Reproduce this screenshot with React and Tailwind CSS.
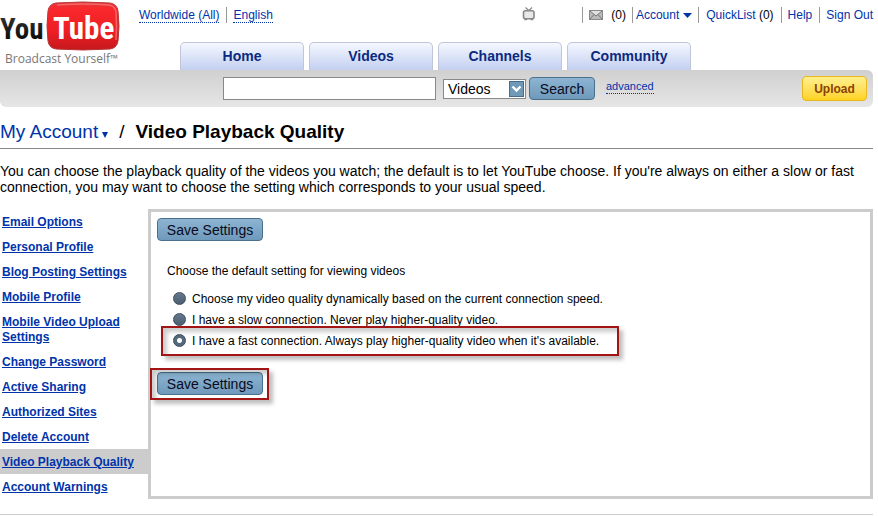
import React from "react";

const LINK = "text-[#0033aa]";
const BLUE_BUTTON =
  "h-[23px] rounded-[4px] border border-[#4a708c] bg-gradient-to-b from-[#8db4d2] to-[#6f99bb] pt-px text-[14px] leading-[21px] text-[#0a0a20]";

function Logo() {
  return (
    <svg width="139" height="70" viewBox="0 0 139 70" className="block" role="img" aria-label="YouTube, Broadcast Yourself">
      <defs>
        <linearGradient id="screen" x1="0" y1="0" x2="0" y2="1">
          <stop offset="0" stopColor="#e2383b" />
          <stop offset="0.15" stopColor="#f8282c" />
          <stop offset="0.6" stopColor="#ee1f24" />
          <stop offset="1" stopColor="#c4181c" />
        </linearGradient>
        <linearGradient id="ink" x1="0" y1="0" x2="0" y2="1">
          <stop offset="0" stopColor="#3a3a3a" />
          <stop offset="1" stopColor="#000" />
        </linearGradient>
      </defs>
      <path
        d="M56 3 Q83 1 110 3 Q117 4 118 11 Q120 26 118 41 Q117 48 110 49 Q83 51 56 49 Q49 48 48 41 Q46 26 48 11 Q49 4 56 3Z"
        fill="url(#screen)"
        stroke="#b8383a"
        strokeWidth="1"
      />
      <path
        d="M57 5 Q83 3 109 5 Q115 6 116 12 Q117 26 116 40"
        fill="none"
        stroke="#ff8a8a"
        strokeOpacity="0.6"
        strokeWidth="1.5"
      />
      <g fontFamily="'Liberation Sans Narrow','Roboto Condensed','Open Sans Condensed',Roboto,sans-serif" fontWeight="700">
        <text x="0" y="39" fontSize="29" fill="url(#ink)">You</text>
        <text x="53" y="39" fontSize="31" fill="#fff">Tube</text>
      </g>
      <text x="5" y="63" fontFamily="'Open Sans','Noto Sans',sans-serif" fontSize="12" fill="#777">
        Broadcast Yourself<tspan fontSize="10" dy="-1">™</tspan>
      </text>
    </svg>
  );
}

function TvIcon() {
  return (
    <svg width="14" height="14" viewBox="0 0 14 14" aria-hidden="true">
      <path d="M3.500 0.500 L6.600 3.400 M10 0.500 L7 3.400" stroke="#888" strokeWidth="1.300" />
      <rect x="1.500" y="3.700" width="10.500" height="8" rx="2" fill="#e8e8e8" stroke="#888" strokeWidth="1.600" />
      <path d="M2.500 12.600h2.500M8.600 12.600h2.500" stroke="#888" strokeWidth="1.400" />
    </svg>
  );
}

function MailIcon() {
  return (
    <svg width="14" height="10" viewBox="0 0 14 10" aria-hidden="true">
      <rect x="0.5" y="0.5" width="13" height="9" fill="#bbb" stroke="#888" />
      <path d="M1 1 L7 6 L13 1Z" fill="#e2e2e2" />
      <path d="M1 1 L7 6 L13 1 M1 9 L5 4.6 M13 9 L9 4.6" fill="none" stroke="#777" />
    </svg>
  );
}

function Divider() {
  return <span className="h-4 w-px bg-[#999]" />;
}

function TopLinks() {
  return (
    <div className="flex h-[42px] items-start pt-[7px] text-[12px] leading-4">
      <a href="#" className={`${LINK} h-4 border-b border-dotted border-[#0033aa]`}>Worldwide (All)</a>
      <div className="mr-[6px] ml-[7px] flex"><Divider /></div>
      <a href="#" className={`${LINK} h-4 border-b border-dotted border-[#0033aa]`}>English</a>
      <div className="mr-[46px] ml-auto"><TvIcon /></div>
      <nav aria-label="Account" className="flex items-center gap-[6px] whitespace-nowrap">
        <Divider />
        <a href="#" aria-label="Inbox" className="flex items-center gap-2 text-black"><MailIcon />(0)</a>
        <Divider />
        <a href="#" className={`${LINK} -ml-[3px] flex items-center gap-1`}>
          Account
          <svg width="9" height="5" viewBox="0 0 9 5" aria-hidden="true"><path d="M0 0h9L4.500 5z" fill="#0033aa" /></svg>
        </a>
        <Divider />
        <span className="px-px"><a href="#" className={LINK}>QuickList</a> (0)</span>
        <Divider />
        <a href="#" className={`${LINK} pr-px`}>Help</a>
        <Divider />
        <a href="#" className={LINK}>Sign Out</a>
      </nav>
    </div>
  );
}

function Tabs() {
  return (
    <nav aria-label="Main" className="flex gap-[5px] pl-[41px]">
      {["Home", "Videos", "Channels", "Community"].map((tab) => (
        <a
          key={tab}
          href="#"
          className="h-7 w-[124px] rounded-t-[5px] border border-b-0 border-[#c0c6d8] bg-gradient-to-b from-[#f5f8ff] to-[#c3cff0] text-center text-[14px] leading-[27px] font-bold text-[#0a2a80]"
        >
          {tab}
        </a>
      ))}
    </nav>
  );
}

function SearchBar() {
  return (
    <form
      onSubmit={(e) => e.preventDefault()}
      className="flex h-[37px] items-center rounded-tr-[6px] rounded-b-[6px] bg-gradient-to-b from-[#d0d0d0] to-[#e6e6e6] pr-[6px] pl-[223px]"
    >
      <input type="text" aria-label="Search" className="h-[23px] w-[213px] border border-[#888] bg-white px-1 text-[14px] outline-none" />
      <div className="relative ml-[7px]">
        <select aria-label="Search in" className="block h-5 w-[83px] appearance-none border border-[#888] bg-white pl-1 text-[14px] leading-[18px] text-black outline-none">
          <option>Videos</option>
          <option>Channels</option>
        </select>
        <svg width="15" height="16" viewBox="0 0 15 16" className="pointer-events-none absolute top-[2px] right-[2px]" aria-hidden="true">
          <rect x="0.5" y="0.5" width="14" height="15" fill="#7099b8" stroke="#456c8c" />
          <path d="M3.500 5.500l4 4 4-4" fill="none" stroke="#fff" strokeWidth="2.400" />
        </svg>
      </div>
      <button type="submit" className={`${BLUE_BUTTON} ml-[3px] w-[66px]`}>Search</button>
      <a href="#" className={`${LINK} mb-1 ml-[11px] border-b border-dotted border-[#0033aa] text-[11px] leading-[13px]`}>advanced</a>
      <button
        type="button"
        className="ml-auto h-[25px] w-[65px] rounded-[4px] border border-[#e8b820] bg-gradient-to-b from-[#fff08a] to-[#ffd21a] pt-px text-[12px] leading-[23px] font-bold text-[#8a4200]"
      >
        Upload
      </button>
    </form>
  );
}

const SIDE_LINKS = [
  "Email Options",
  "Personal Profile",
  "Blog Posting Settings",
  "Mobile Profile",
  "Mobile Video Upload Settings",
  "Change Password",
  "Active Sharing",
  "Authorized Sites",
  "Delete Account",
  "Video Playback Quality",
  "Account Warnings",
];

function Sidebar() {
  return (
    <nav aria-label="Settings" className="w-[148px] shrink-0 text-[12px] leading-[15px] font-bold">
      <ul>
        {SIDE_LINKS.map((item) => (
          <li key={item} className={item === "Video Playback Quality" ? "bg-[#ccc] pt-[6px] pb-1 pl-[2px]" : "pt-[6px] pb-1 pl-[2px]"}>
            <a href="#" className="text-[#0033aa] underline">{item}</a>
          </li>
        ))}
      </ul>
    </nav>
  );
}

const OPTIONS = [
  "Choose my video quality dynamically based on the current connection speed.",
  "I have a slow connection. Never play higher-quality video.",
  "I have a fast connection. Always play higher-quality video when it's available.",
];

const MARK =
  "pointer-events-none absolute border-2 border-[#a31515] shadow-[4px_4px_4px_rgba(0,0,0,0.25),inset_4px_4px_4px_rgba(0,0,0,0.2)]";

function Panel() {
  return (
    <form onSubmit={(e) => e.preventDefault()} className="min-w-0 flex-1 border-[3px] border-[#ccc] p-[6px]">
      <button type="submit" className={`${BLUE_BUTTON} block w-[106px]`}>Save Settings</button>
      <fieldset className="mt-[22px] pl-[10px] text-[12px] text-black">
        <legend className="leading-4">Choose the default setting for viewing videos</legend>
        <div className="mt-[9px] pl-[6px]">
          {OPTIONS.map((text, i) => (
            <div key={text} className="relative flex h-[21px] w-fit items-center">
              <label className="flex items-center gap-[6px] whitespace-nowrap">
                <input
                  type="radio"
                  name="quality"
                  defaultChecked={i === 2}
                  className="size-[13px] appearance-none rounded-full border border-[#3c4c5c] bg-gradient-to-b from-[#66798c] to-[#4c5f72] checked:bg-[radial-gradient(circle,#fff_0_2px,#55687c_3px)]"
                />
                {text}
              </label>
              {i === 2 && <span className={`${MARK} -top-1 -right-5 -bottom-[5px] -left-3`} />}
            </div>
          ))}
        </div>
      </fieldset>
      <div className="relative mt-[21px] w-fit">
        <button type="submit" className={`${BLUE_BUTTON} block w-[106px]`}>Save Settings</button>
        <span className={`${MARK} -top-1 -right-[6px] -bottom-[5px] -left-[7px]`} />
      </div>
    </form>
  );
}

export default function App() {
  return (
    <div className="min-h-screen overflow-x-hidden bg-white pr-[5px] font-['Liberation_Sans',Arial,sans-serif] text-black">
      <header>
        <div className="flex">
          <a href="#" className="shrink-0"><Logo /></a>
          <div className="min-w-0 flex-1">
            <TopLinks />
            <Tabs />
          </div>
        </div>
        <SearchBar />
      </header>
      <main>
        <div className="mt-[13px] flex h-[29px] items-start border-b border-[#888] text-[19px] leading-6">
          <a href="#" className={`${LINK} flex items-center gap-1`}>
            My Account
            <svg width="6" height="6" viewBox="0 0 6 6" className="mt-[6px]" aria-hidden="true"><path d="M0 0h6L3 6z" fill="#0033aa" /></svg>
          </a>
          <span className="mx-[11px]">/</span>
          <h1 className="font-bold">Video Playback Quality</h1>
        </div>
        <p className="mt-[14px] text-[14px] leading-4">
          You can choose the playback quality of the videos you watch; the default is to let YouTube choose. If you're always on either a slow or fast connection, you may want to choose the setting which corresponds to your usual speed.
        </p>
        <div className="mt-[14px] flex">
          <Sidebar />
          <Panel />
        </div>
      </main>
      <footer className="mt-[15px] border-t border-[#ccc]" />
    </div>
  );
}
